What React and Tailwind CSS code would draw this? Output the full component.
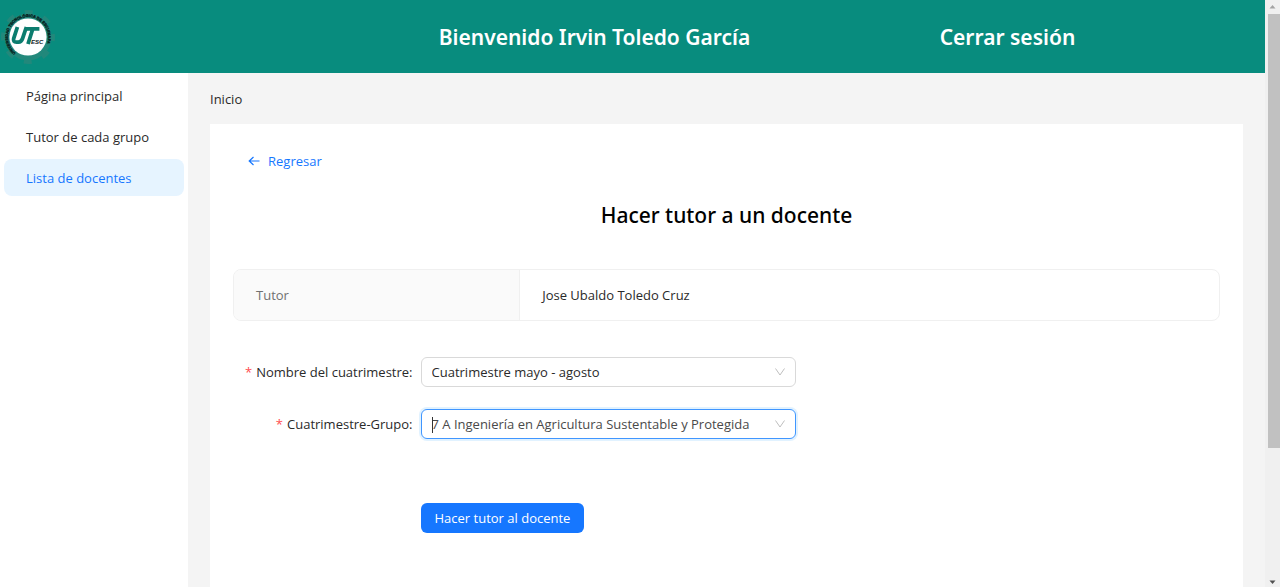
import React from "react";

const menu = [
  { label: "Página principal" },
  { label: "Tutor de cada grupo" },
  { label: "Lista de docentes", active: true },
];

function Logo() {
  return (
    <svg viewBox="0 0 56 72" className="h-18 w-14 shrink-0" role="img" aria-label="UTESC">
      <defs>
        <path id="ring" d="M 15.8 51.9 A 20 20 0 1 1 40.2 51.9" />
      </defs>
      <g fill="#22887b">
        <circle cx="28" cy="36" r="23.5" />
        <circle
          cx="28"
          cy="36"
          r="24.5"
          fill="none"
          stroke="#22887b"
          strokeWidth="5"
          strokeDasharray="8 11.24"
          strokeDashoffset="4"
        />
      </g>
      <circle cx="28" cy="36" r="18.6" fill="#fdfefe" />
      <text fontSize="3.9" fontWeight="700" fill="#06231f" stroke="#06231f" strokeWidth="0.35" fontFamily="'Liberation Sans', sans-serif">
        <textPath href="#ring">UNIVERSIDAD TECNOLÓGICA DE ESCUINAPA</textPath>
      </text>
      <g fill="none" stroke="#0a7c6e" strokeWidth="3.8">
        <path d="M17.4 26 L13.7 37.4 Q12.8 41.2 16.4 41.2 L18.4 41.2 Q21.4 41.2 22.6 37.4 L26.4 26" />
        <path d="M25.8 27.8 L39.4 27.8 M32.8 27.8 L28 43" />
      </g>
      <text x="31" y="43" fontSize="6" fontWeight="700" fontStyle="italic" fill="#10231f" fontFamily="'Liberation Sans', sans-serif">
        ESC
      </text>
    </svg>
  );
}

function Field({ id, label, value, focused }) {
  return (
    <div className="grid grid-cols-[19%_38%] items-center">
      <label htmlFor={id} className="pr-2 text-right">
        <span className="mr-1 text-[#ff4d4f]">*</span>
        {label}:
      </label>
      <div className="relative">
        <select
          id={id}
          className={
            focused
              ? "block h-[30px] w-full appearance-none rounded-md border border-[#4096ff] bg-white pr-8 pl-2.5 text-[#4a4a4a] shadow-[0_0_0_2px_rgba(5,145,255,0.12)] outline-none"
              : "block h-[30px] w-full appearance-none rounded-md border border-[#d9d9d9] bg-white pr-8 pl-2.5 text-[#2a2a2a] outline-none"
          }
        >
          <option>{value}</option>
        </select>
        {focused && <span className="absolute top-2 left-[11px] h-4 w-px bg-[#333]" />}
        <svg viewBox="0 0 12 12" className="pointer-events-none absolute top-[9px] right-2.5 size-3" fill="none" stroke="#bfbfbf" strokeWidth="1">
          <path d="M1.5 2.5 L6 9 L10.5 2.5" />
        </svg>
      </div>
    </div>
  );
}

function ScrollBar() {
  return (
    <div className="flex w-[15px] shrink-0 flex-col items-center bg-[#f0f0f0]" aria-hidden="true">
      <svg viewBox="0 0 15 14" className="h-3.5 w-full shrink-0">
        <path d="M4.5 8.5 L7.5 5 L10.5 8.5 Z" fill="#a3a3a3" />
      </svg>
      <div className="ml-0.5 h-[74%] w-3 bg-[#c1c1c1]" />
      <svg viewBox="0 0 15 14" className="mt-auto h-3.5 w-full shrink-0">
        <path d="M4.5 7.5 L7.5 11 L10.5 7.5 Z" fill="#505050" />
      </svg>
    </div>
  );
}

export default function App() {
  return (
    <div className="flex h-screen overflow-hidden bg-[#f4f4f4] font-['Open_Sans',sans-serif] text-[13px] leading-5 text-[#2a2a2a]">
      <div className="flex min-w-0 flex-1 flex-col">
        <header className="grid h-[73px] shrink-0 grid-cols-[388fr_413fr_413fr_51fr] items-center bg-[#088c7e] text-center font-['Noto_Sans',sans-serif] text-[21px] leading-7 font-semibold text-white">
          <Logo />
          <h1>Bienvenido Irvin Toledo García</h1>
          <div>
            <a href="#salir">Cerrar sesión</a>
          </div>
        </header>
        <div className="flex min-h-0 flex-1">
          <nav className="flex w-[188px] shrink-0 flex-col gap-1 bg-white px-1 pt-1">
            {menu.map((item) => (
              <a
                key={item.label}
                href="#menu"
                className={
                  item.active
                    ? "flex h-[37px] items-center rounded-lg bg-[#e6f4ff] px-[22px] text-[#1677ff]"
                    : "flex h-[37px] items-center rounded-lg px-[22px]"
                }
              >
                {item.label}
              </a>
            ))}
          </nav>
          <main className="flex min-w-0 flex-1 flex-col px-[22px]">
            <div className="flex h-[51px] shrink-0 items-center">Inicio</div>
            <section className="flex-1 bg-white px-[23px] pt-[22px]">
              <a href="#regresar" className="ml-[15px] inline-flex h-[30px] items-center gap-2 text-[#1677ff]">
                <svg viewBox="0 0 12 12" className="size-3" fill="none" stroke="currentColor" strokeWidth="1.2">
                  <path d="M11.5 6 H1.5 M5.5 2 L1.2 6 L5.5 10" />
                </svg>
                Regresar
              </a>
              <h2 className="mt-6 text-center font-['Noto_Sans',sans-serif] text-[21px] leading-[30px] font-medium text-black">
                Hacer tutor a un docente
              </h2>
              <div className="mt-[39px] overflow-hidden rounded-lg border border-[#f0f0f0]">
                <table className="w-full table-fixed text-left">
                  <tbody>
                    <tr className="h-[50px]">
                      <th className="w-[29%] border-r border-[#f0f0f0] bg-[#fafafa] px-[22px] font-normal text-[#707070]">Tutor</th>
                      <td className="px-[22px]">Jose Ubaldo Toledo Cruz</td>
                    </tr>
                  </tbody>
                </table>
              </div>
              <form className="mt-9 flex flex-col gap-[22px]">
                <Field id="cuatrimestre" label="Nombre del cuatrimestre" value="Cuatrimestre mayo - agosto" />
                <Field id="grupo" label="Cuatrimestre-Grupo" value="7 A Ingeniería en Agricultura Sustentable y Protegida" focused />
                <div className="mt-[42px] grid grid-cols-[19%_81%]">
                  <button type="button" className="col-start-2 h-[30px] justify-self-start rounded-md bg-[#1677ff] px-3.5 text-white">
                    Hacer tutor al docente
                  </button>
                </div>
              </form>
            </section>
          </main>
        </div>
      </div>
      <ScrollBar />
    </div>
  );
}
